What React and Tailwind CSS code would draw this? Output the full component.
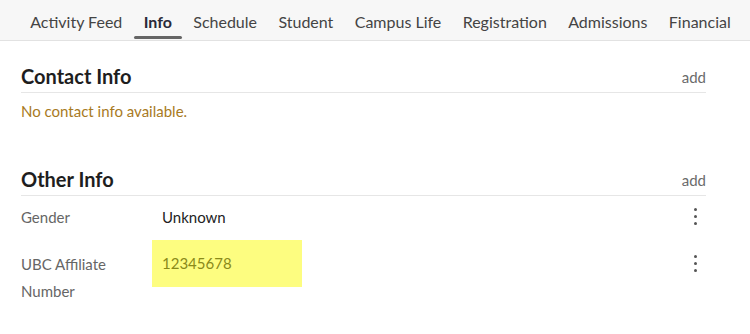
import React from 'react'

const tabs = ['Activity Feed', 'Info', 'Schedule', 'Student', 'Campus Life', 'Registration', 'Admissions', 'Financial']

function Kebab() {
  return (
    <div className="flex flex-col items-center gap-[4px]">
      <span className="block w-[3px] h-[3px] rounded-full bg-[#555]" />
      <span className="block w-[3px] h-[3px] rounded-full bg-[#555]" />
      <span className="block w-[3px] h-[3px] rounded-full bg-[#555]" />
    </div>
  )
}

function SectionHeader({ title }) {
  return (
    <div className="flex items-end justify-between border-b border-[#e6e6e6] pb-[3px]">
      <h2 className="text-[20px] leading-[26px] font-bold text-[#1e1e1e]">{title}</h2>
      <span className="text-[15px] leading-[20px] text-[#6b6b6b] mb-[2px]">add</span>
    </div>
  )
}

export default function App() {
  return (
    <div className="w-[750px] h-[334px] bg-white overflow-hidden" style={{ fontFamily: 'Lato, "Open Sans", sans-serif' }}>
      {/* tabs */}
      <nav className="h-[41px] bg-[#f7f7f7] border-b border-[#e2e2e2] flex items-stretch pl-[19.5px]">
        {tabs.map((t) => (
          <div key={t} className="relative flex items-center pt-[4px] px-[10.7px]">
            <span className={t === 'Info' ? 'text-[16px] font-bold text-[#2a2a3a]' : 'text-[16px] text-[#444]'}>{t}</span>
            {t === 'Info' && <span className="absolute left-[1px] right-[1px] bottom-[1px] h-[3px] rounded-sm bg-[#666]" />}
          </div>
        ))}
      </nav>

      <div className="ml-[21px] w-[685px]">
        {/* contact info */}
        <div className="mt-[22px]">
          <SectionHeader title="Contact Info" />
          <p className="mt-[8px] text-[15px] leading-[20px] text-[#a87a1e]">No contact info available.</p>
        </div>

        {/* other info */}
        <div className="mt-[45px]">
          <SectionHeader title="Other Info" />
          <div className="flex items-start mt-[8px]">
            <div className="w-[131px] text-[15px] leading-[27px] text-[#666]">Gender</div>
            <div className="flex-1 px-[10px] text-[15px] leading-[27px] text-[#222]">Unknown</div>
            <div className="w-[24px] flex justify-center pt-[4px] mr-[-1px]"><Kebab /></div>
          </div>
          <div className="flex items-start mt-[9px]">
            <div className="w-[131px] pt-[11px] text-[15px] leading-[27px] text-[#666]">UBC Affiliate<br />Number</div>
            <div className="flex-1">
              <div className="w-[150px] h-[47px] bg-[#fdfd80] px-[10px] flex items-center text-[15px] text-[#8a8a1a]">12345678</div>
            </div>
            <div className="w-[24px] flex justify-center pt-[15px] mr-[-1px]"><Kebab /></div>
          </div>
        </div>
      </div>
    </div>
  )
}
